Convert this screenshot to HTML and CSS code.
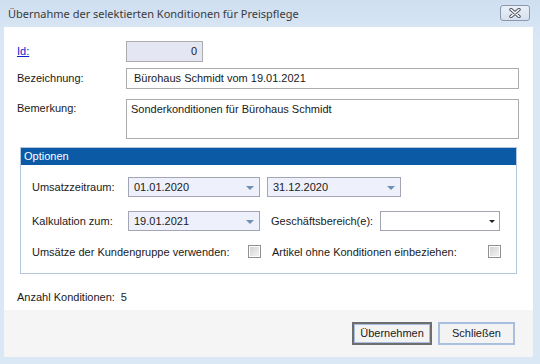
FILE: index.html
```html
<!DOCTYPE html>
<html lang="de">
  <head>
    <meta charset="UTF-8" />
    <title>Übernahme der selektierten Konditionen für Preispflege</title>
    <link rel="stylesheet" href="styles.css">
  </head>
  <body>
    <div class="window">
      <div class="titlebar">
        <span class="title">Übernahme der selektierten Konditionen für Preispflege</span>
        <a class="close" href="javascript:void(0);">
          <svg width="14" height="10" viewBox="0 0 14 10">
            <path d="M3 1.5 L11 8.5 M11 1.5 L3 8.5" stroke="#4a4f5c" stroke-width="3.4" stroke-linecap="round" />
            <path d="M3 1.5 L11 8.5 M11 1.5 L3 8.5" stroke="#fff" stroke-width="1.6" stroke-linecap="round" />
          </svg>
        </a>
      </div>
      <div class="client">
        <div class="content">
          <div class="f-row f-id">
            <a class="f-label link" href="javascript:void(0);">Id:</a>
            <div class="f-input id-box">0</div>
          </div>
          <div class="f-row f-name">
            <span class="f-label">Bezeichnung:</span>
            <div class="f-input wide">Bürohaus Schmidt vom 19.01.2021</div>
          </div>
          <div class="f-row f-note">
            <span class="f-label">Bemerkung:</span>
            <div class="f-input wide memo">Sonderkonditionen für Bürohaus Schmidt</div>
          </div>

          <div class="group">
            <div class="g-title">Optionen</div>
            <div class="g-body">
              <div class="g-row">
                <span class="g-label">Umsatzzeitraum:</span>
                <div class="combo date">01.01.2020<i class="arrow"></i></div>
                <div class="combo date second">31.12.2020<i class="arrow"></i></div>
              </div>
              <div class="g-row">
                <span class="g-label">Kalkulation zum:</span>
                <div class="combo date">19.01.2021<i class="arrow"></i></div>
                <span class="g-label2">Geschäftsbereich(e):</span>
                <div class="combo plain"><i class="arrow dark"></i></div>
              </div>
              <div class="g-row g-checks">
                <span class="g-label long">Umsätze der Kundengruppe verwenden:</span>
                <span class="check"></span>
                <span class="g-label2 long">Artikel ohne Konditionen einbeziehen:</span>
                <span class="check"></span>
              </div>
            </div>
          </div>

          <div class="count">
            <span>Anzahl Konditionen:</span>
            <span class="count-num">5</span>
          </div>
        </div>
        <div class="footer">
          <a class="btn default" href="javascript:void(0);">Übernehmen</a>
          <a class="btn" href="javascript:void(0);">Schließen</a>
        </div>
      </div>
    </div>
  </body>
</html>
```

FILE: styles.css
```css
* {
  margin: 0;
  padding: 0;
  box-sizing: border-box;
}
html,
body {
  width: 540px;
  height: 364px;
  overflow: hidden;
}
body {
  font-family: 'Liberation Sans', Arial, sans-serif;
  font-size: 11px;
  color: #1a1a1a;
  background-color: #dae7f5;
}
a {
  text-decoration: none;
  color: inherit;
}
.window {
  width: 540px;
  height: 364px;
  padding: 0 7px 7px 4px;
  display: flex;
  flex-direction: column;
  background: linear-gradient(#cfdff1, #dae7f5 40px);
}
.titlebar {
  height: 27px;
  display: flex;
  align-items: center;
  justify-content: space-between;
}
.title {
  font-family: 'Noto Sans', 'Open Sans', sans-serif;
  font-size: 11px;
  color: #3a3a3a;
  padding-left: 4px;
  margin-top: -1px;
}
.close {
  width: 30px;
  height: 16px;
  margin-top: -2px;
  margin-right: 3px;
  border: 1px solid #8c97ad;
  border-radius: 3px;
  background: linear-gradient(#e9f0f8, #d6e1ee);
  display: flex;
  align-items: center;
  justify-content: center;
}
.client {
  flex: 1;
  display: flex;
  flex-direction: column;
  background-color: #fff;
}
.content {
  flex: 1;
  padding: 14px 14px 0 13px;
}
.f-row {
  display: flex;
  align-items: flex-start;
}
.f-label {
  width: 109px;
  line-height: 21px;
}
.link {
  color: #0a24c8;
  text-decoration: underline;
}
.f-input {
  height: 21px;
  border: 1px solid #acacac;
  line-height: 19px;
  padding: 0 7px;
  background-color: #fff;
}
.id-box {
  width: 77px;
  text-align: right;
  padding-right: 5px;
  background-color: #e4e6f3;
}
.f-name {
  margin-top: 6px;
}
.f-note {
  margin-top: 10px;
}
.wide {
  width: 393px;
}
.memo {
  height: 40px;
  padding: 2px 4px;
  line-height: 14px;
}
.f-note .f-label {
  line-height: 14px;
  padding-top: 2px;
}
.group {
  margin: 8px 2px 0 3px;
  height: 127px;
  border: 1px solid #b5c7de;
}
.g-title {
  height: 17px;
  line-height: 16px;
  padding-left: 3px;
  color: #fff;
  background-color: #0b5aa6;
}
.g-body {
  padding: 12px 0 0 11px;
}
.g-row {
  display: flex;
  align-items: center;
  height: 20px;
  margin-bottom: 14px;
}
.g-label {
  width: 96px;
}
.g-label2 {
  margin-left: 11px;
  width: 109px;
}
.combo {
  position: relative;
  height: 20px;
  border: 1px solid #a3a5b4;
  line-height: 18px;
  padding-left: 5px;
}
.date {
  width: 132px;
  background-color: #eef0fb;
}
.second {
  margin-left: 7px;
  width: 134px;
}
.plain {
  width: 120px;
  background-color: #fff;
}
.arrow {
  position: absolute;
  right: 5px;
  top: 8px;
  border-left: 4px solid transparent;
  border-right: 4px solid transparent;
  border-top: 4px solid #6f8fb5;
}
.arrow.dark {
  right: 4px;
  border-left-width: 3px;
  border-right-width: 3px;
  border-top: 3px solid #222;
}
.g-checks {
  height: 13px;
}
.g-checks .g-label {
  width: 216px;
}
.g-checks .g-label2 {
  width: 216px;
}
.check {
  width: 13px;
  height: 13px;
  border: 1px solid #8e8f8f;
  background: linear-gradient(135deg, #d0d0d0, #f6f6f6);
  box-shadow: inset 0 0 0 1px #fff;
}
.count {
  margin-top: 16px;
  display: flex;
  line-height: 14px;
}
.count-num {
  margin-left: 6px;
}
.footer {
  height: 47px;
  background-color: #f5f5f5;
  display: flex;
  justify-content: flex-end;
  align-items: flex-start;
  padding: 12px 18px 0 0;
  gap: 6px;
}
.btn {
  height: 23px;
  line-height: 19px;
  text-align: center;
  width: 77px;
  border: 2px solid #a9bfe0;
  background-color: #f3f3f3;
  color: #1a1a1a;
}
.btn.default {
  width: 80px;
  border: 2px solid #6e6e6e;
  box-shadow: inset 0 0 0 1px #a9bfe0;
}
```
